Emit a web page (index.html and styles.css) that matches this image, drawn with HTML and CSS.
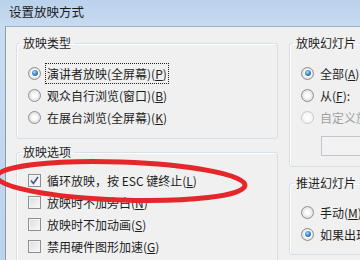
FILE: index.html
```html
<!DOCTYPE html>
<html lang="zh-CN">
<head>
  <meta charset="UTF-8" />
  <title>设置放映方式</title>
  <link rel="stylesheet" href="styles.css">
</head>
<body>
  <div class="window">
    <div class="titlebar">设置放映方式</div>
    <div class="client">
      <div class="col col-left">
        <fieldset class="group group-type">
          <legend>放映类型</legend>
          <label class="row"><span class="radio checked"></span><span class="focus">演讲者放映(全屏幕)(<u>P</u>)</span></label>
          <label class="row"><span class="radio"></span><span class="text">观众自行浏览(窗口)(<u>B</u>)</span></label>
          <label class="row"><span class="radio"></span><span class="text">在展台浏览(全屏幕)(<u>K</u>)</span></label>
        </fieldset>
        <fieldset class="group group-options">
          <legend>放映选项</legend>
          <label class="row"><span class="check checked"><svg width="9" height="9" viewBox="0 0 9 9"><path d="M1 4.5 L3.4 7.5 L8 1" fill="none" stroke="#3d5698" stroke-width="1.6"/></svg></span><span class="text">循环放映，按 ESC 键终止(<u>L</u>)</span></label>
          <label class="row"><span class="check"></span><span class="text">放映时不加旁白(<u>N</u>)</span></label>
          <label class="row"><span class="check"></span><span class="text">放映时不加动画(<u>S</u>)</span></label>
          <label class="row"><span class="check"></span><span class="text">禁用硬件图形加速(<u>G</u>)</span></label>
        </fieldset>
      </div>
      <div class="col col-right">
        <fieldset class="group group-slides">
          <legend>放映幻灯片</legend>
          <label class="row"><span class="radio checked"></span><span class="text">全部(<u>A</u>)</span></label>
          <label class="row"><span class="radio"></span><span class="text">从(<u>F</u>):</span></label>
          <label class="row disabled"><span class="radio"></span><span class="text">自定义放映(<u>C</u>):</span></label>
          <div class="combo"></div>
        </fieldset>
        <fieldset class="group group-advance">
          <legend>推进幻灯片</legend>
          <label class="row"><span class="radio"></span><span class="text">手动(<u>M</u>)</span></label>
          <label class="row"><span class="radio checked"></span><span class="text">如果出现计时，则使用它(<u>U</u>)</span></label>
        </fieldset>
      </div>
    </div>
    <svg class="mark" width="360" height="260" viewBox="0 0 360 260">
      <ellipse cx="121" cy="181" rx="124" ry="19" transform="rotate(2 121 181)" fill="none" stroke="#e5262b" stroke-width="5"/>
    </svg>
  </div>
</body>
</html>
```

FILE: styles.css
```css
* {
  box-sizing: border-box;
}

body {
  margin: 0;
  width: 360px;
  height: 260px;
  overflow: hidden;
  font-family: "Noto Sans CJK SC", "Noto Sans", sans-serif;
  font-size: 12px;
  color: #1e1e1e;
  background: #bcd3ec;
}

.window {
  position: relative;
  width: 480px;
  height: 260px;
  background: linear-gradient(#bad2ec, #c9dcf1 30px, #bcd3ec);
}

.titlebar {
  height: 26px;
  line-height: 24px;
  padding-left: 9px;
  font-size: 12.5px;
  color: #1a1a1a;
}

.client {
  display: flex;
  gap: 11px;
  margin-left: 5px;
  height: 234px;
  padding: 8px 0 0 10px;
  background: #f0f0f0;
  border-top: 1px solid #9fb0c4;
  border-left: 1px solid #8d9bad;
}

.col {
  display: flex;
  flex-direction: column;
}

.col-left {
  width: 262px;
  gap: 5px;
}

.col-right {
  width: 180px;
  gap: 8px;
}

.group {
  margin: 0;
  min-width: 0;
  padding: 11px 0 10px 11px;
  border: 1px solid #d5dfe5;
  border-radius: 3px;
  box-shadow: inset 1px 1px 0 #fff;
}

.group legend {
  margin-left: -8px;
  padding: 0 3px;
  line-height: 16px;
}

.group-options {
  padding-top: 9px;
}

.group-advance {
  padding-top: 10px;
  padding-bottom: 9px;
}

.row {
  display: flex;
  align-items: center;
  gap: 6px;
  height: 22px;
  white-space: nowrap;
}

.row.disabled {
  color: #a0a0a0;
}

.row u {
  text-decoration: underline;
  text-underline-offset: 1px;
}

.focus {
  margin-left: -2px;
  padding: 0 1px;
  line-height: 19px;
  border: 1px dotted #222;
}

.radio {
  flex: none;
  display: flex;
  align-items: center;
  justify-content: center;
  width: 13px;
  height: 13px;
  border-radius: 50%;
  border: 1px solid #8f8f8f;
  background: radial-gradient(circle at 50% 50%, #fdfdfd 25%, #e0e0e0 70%, #c9c9c9 100%);
}

.row.disabled .radio {
  border-color: #c8c8c8;
  background: radial-gradient(circle at 50% 50%, #fbfbfb 30%, #ececec 100%);
}

.radio.checked::after {
  content: "";
  width: 6px;
  height: 6px;
  border-radius: 50%;
  background: radial-gradient(circle at 40% 35%, #a6dcfb 0, #3b86c9 50%, #1c4f86 100%);
  box-shadow: 0 0 0 1px #fff;
}

.check {
  flex: none;
  display: flex;
  align-items: center;
  justify-content: center;
  width: 13px;
  height: 13px;
  border: 1px solid #8f8f8f;
  background: linear-gradient(135deg, #dcdcdc, #fafafa);
  box-shadow: inset 0 0 0 1px #f4f4f4;
}

.check.checked {
  background: linear-gradient(135deg, #e8e8e8, #fdfdfd);
}

.combo {
  height: 20px;
  margin: 8px 0 0 20px;
  border: 1px solid #c2c6cc;
  background: #f2f2f2;
}

.mark {
  position: absolute;
  left: 0;
  top: 0;
  pointer-events: none;
}
```
